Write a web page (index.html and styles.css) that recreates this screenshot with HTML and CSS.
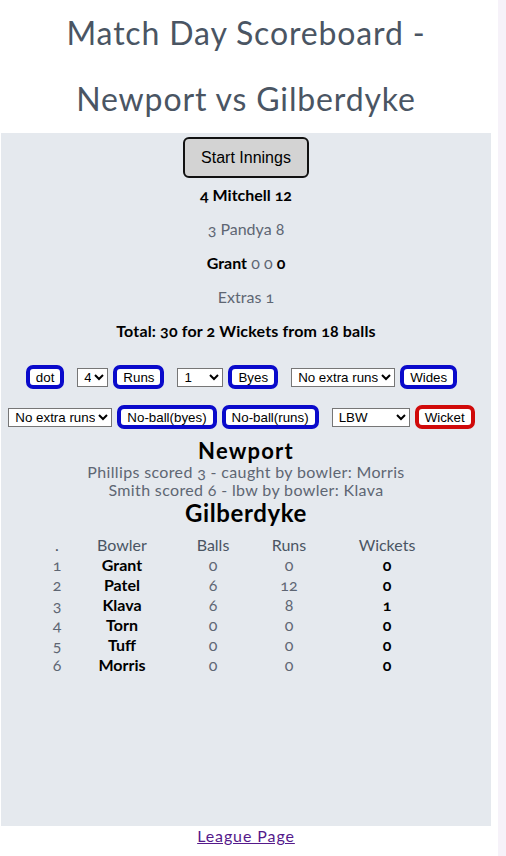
FILE: index.html
```html
<!DOCTYPE html>
<html lang="en">
<head>
<meta charset="utf-8">
<title>Match Day Scoreboard</title>
<link rel="stylesheet" href="styles.css">
</head>
<body>
<div class="page">
  <main class="main">
    <h1 class="title">Match Day Scoreboard - Newport vs Gilberdyke</h1>
    <section class="panel">
      <button class="start-btn" type="button">Start Innings</button>
      <p class="line strong">4 Mitchell 12</p>
      <p class="line muted">3 Pandya 8</p>
      <p class="line"><b class="strong">Grant</b> <span class="muted">0 0</span> <b class="strong">0</b></p>
      <p class="line muted">Extras 1</p>
      <p class="line strong total">Total: 30 for 2 Wickets from 18 balls</p>

      <div class="controls">
        <div class="ctrl-row">
          <button class="act" type="button">dot</button>
          <span class="gap"></span>
          <select class="sel sel-runs"><option>4</option></select>
          <button class="act" type="button">Runs</button>
          <span class="gap"></span>
          <select class="sel sel-byes"><option>1</option></select>
          <button class="act" type="button">Byes</button>
          <span class="gap"></span>
          <select class="sel sel-extra"><option>No extra runs</option></select>
          <button class="act" type="button">Wides</button>
          <span class="tail"></span>
        </div>
        <div class="ctrl-row">
          <select class="sel sel-extra"><option>No extra runs</option></select>
          <button class="act" type="button">No-ball(byes)</button>
          <button class="act" type="button">No-ball(runs)</button>
          <span class="gap"></span>
          <select class="sel sel-how"><option>LBW</option></select>
          <button class="act act-red" type="button">Wicket</button>
          <span class="tail"></span>
        </div>
      </div>

      <h2 class="team">Newport</h2>
      <p class="out">Phillips scored 3 - caught by bowler: Morris</p>
      <p class="out">Smith scored 6 - lbw by bowler: Klava</p>
      <h2 class="team team-b">Gilberdyke</h2>

      <table class="bowling">
        <colgroup>
          <col class="c1"><col class="c2"><col class="c3"><col class="c4"><col class="c5">
        </colgroup>
        <thead>
          <tr><th>.</th><th>Bowler</th><th>Balls</th><th>Runs</th><th>Wickets</th></tr>
        </thead>
        <tbody>
          <tr><td class="n">1</td><td class="name">Grant</td><td class="n">0</td><td class="n">0</td><td class="w">0</td></tr>
          <tr><td class="n">2</td><td class="name">Patel</td><td class="n">6</td><td class="n">12</td><td class="w">0</td></tr>
          <tr><td class="n">3</td><td class="name">Klava</td><td class="n">6</td><td class="n">8</td><td class="w">1</td></tr>
          <tr><td class="n">4</td><td class="name">Torn</td><td class="n">0</td><td class="n">0</td><td class="w">0</td></tr>
          <tr><td class="n">5</td><td class="name">Tuff</td><td class="n">0</td><td class="n">0</td><td class="w">0</td></tr>
          <tr><td class="n">6</td><td class="name">Morris</td><td class="n">0</td><td class="n">0</td><td class="w">0</td></tr>
        </tbody>
      </table>
    </section>
    <footer class="foot"><a class="league" href="#">League Page</a></footer>
  </main>
  <div class="strip"></div>
</div>
</body>
</html>
```

FILE: styles.css
```css
html, body {
  margin: 0;
  padding: 0;
  background: #ffffff;
}
body {
  font-family: Lato, "Open Sans", sans-serif;
  font-variant-numeric: oldstyle-nums;
  color: #4a5563;
}
.page {
  display: grid;
  grid-template-columns: 492px 1fr 8px;
  min-height: 856px;
}
.strip {
  grid-column: 3;
  background: #f6f2f9;
}
.main {
  display: flex;
  flex-direction: column;
}
.title {
  margin: 0;
  padding: 0 50px;
  font-size: 32px;
  font-weight: 400;
  line-height: 66px;
  text-align: center;
  color: #4a5563;
  letter-spacing: 0.85px;
}
.panel {
  margin: 1px 1px 0 1px;
  background: #e5e9ee;
  height: 693px;
  box-sizing: border-box;
  display: flex;
  flex-direction: column;
  align-items: center;
  padding-top: 4px;
}
.start-btn {
  font-family: "Liberation Sans", Arial, sans-serif;
  font-size: 16px;
  background: #d3d3d3;
  color: #000;
  border: 2px solid #111;
  border-radius: 6px;
  width: 126px;
  height: 41px;
  padding: 0;
}
.line {
  margin: 0;
  margin-top: 16px;
  font-size: 16px;
  line-height: 18px;
  text-align: center;
}
.line:first-of-type { margin-top: 8px; }
.total { letter-spacing: 0.15px; }
.strong { font-weight: 700; color: #000; }
.muted { color: #5e6673; font-weight: 400; }
.controls {
  margin-top: 25px;
  display: flex;
  flex-direction: column;
  align-items: center;
  gap: 16px;
  width: 100%;
}
.ctrl-row {
  display: flex;
  align-items: center;
  gap: 5px;
}
.gap { width: 3px; }
.tail { width: 4px; }
.act {
  font-family: "Liberation Sans", Arial, sans-serif;
  font-size: 13.33px;
  color: #000;
  background: #fff;
  border: 4px solid #0a0acb;
  border-radius: 7px;
  padding: 0 6px;
  height: 24px;
  line-height: 15px;
}
.act-red { border-color: #d00a0a; }
.sel {
  font-family: "Liberation Sans", Arial, sans-serif;
  font-size: 13.33px;
  color: #000;
  background: #fff;
  border: 1px solid #767676;
  border-radius: 0;
  height: 19px;
  padding: 0 0 0 2px;
}
.sel-runs { width: 31px; }
.sel-byes { width: 46px; }
.sel-extra { width: 104px; }
.sel-how { width: 78px; }
.team {
  margin: 10px 0 0;
  font-size: 22px;
  line-height: 24px;
  font-weight: 700;
  color: #000;
  letter-spacing: 1.2px;
}
.team-b { margin-top: 1px; font-size: 24px; line-height: 26px; letter-spacing: 0.6px; }
.out {
  margin: 0;
  font-size: 16px;
  line-height: 18px;
  color: #5e6673;
  letter-spacing: 0.35px;
}
.bowling {
  width: 80%;
  margin-top: 9px;
  border-collapse: collapse;
  table-layout: fixed;
  font-size: 16px;
}
.c1 { width: 16px; }
.c2 { width: 114px; }
.c3 { width: 68px; }
.c4 { width: 84px; }
.c5 { width: 112px; }
.bowling th, .bowling td {
  padding: 0;
  line-height: 20px;
  text-align: center;
}
.bowling th { font-weight: 400; color: #4a5563; }
.bowling .n { color: #5e6673; }
.bowling .name { font-weight: 700; color: #000; }
.bowling .w { font-weight: 700; color: #000; }
.foot {
  text-align: center;
  line-height: 20px;
}
.league {
  font-size: 16px;
  color: #551a8b;
  text-decoration: underline;
  letter-spacing: 0.9px;
}
```
